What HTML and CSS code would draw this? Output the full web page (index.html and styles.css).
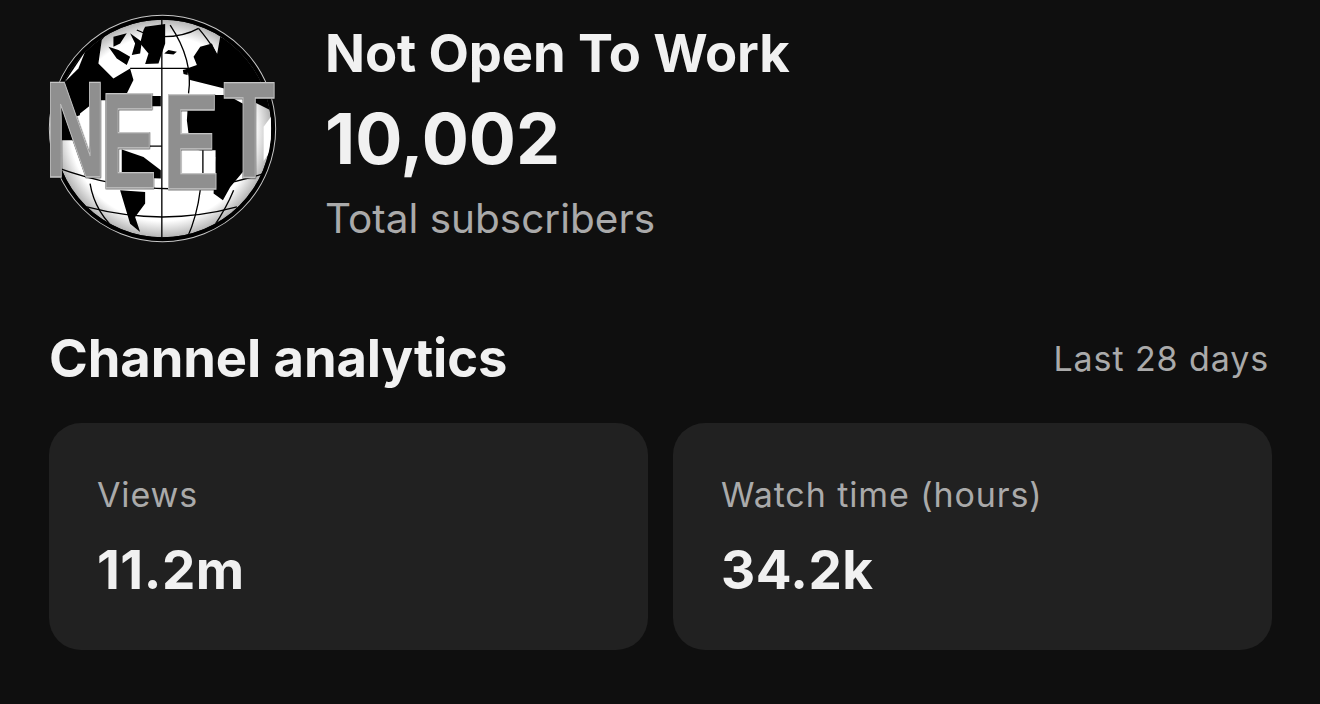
FILE: index.html
```html
<!DOCTYPE html>
<html lang="en">
<head>
    <meta charset="UTF-8">
    <meta name="viewport" content="width=device-width, initial-scale=1.0">
    <title>Channel dashboard</title>
    <link rel="stylesheet" href="styles.css">
</head>
<body>
    <div class="container">
        <header class="channel">
            <svg class="avatar" viewBox="57 45 680 680" aria-label="NEET globe logo">
                <defs>
                    <clipPath id="globeClip"><circle cx="397" cy="385" r="326"/></clipPath>
                    <radialGradient id="shade" cx="0.5" cy="0.5" r="0.5">
                        <stop offset="0" stop-color="#fff"/>
                        <stop offset="0.85" stop-color="#fff"/>
                        <stop offset="1" stop-color="#b4b4b4"/>
                    </radialGradient>
                </defs>
                <circle cx="397" cy="385" r="339" fill="#000" stroke="#c8c8c8" stroke-width="3"/>
                <g clip-path="url(#globeClip)">
                    <circle cx="397" cy="385" r="326" fill="url(#shade)"/>
                    <!-- land -->
                    <path d="M60 420 L60 250 L100 190 L165 130 L240 90 L215 120 L205 190 L250 235 L300 205 L310 240 L280 300 L200 300 L150 340 L140 420Z"/>
                    <path d="M340 90 L345 80 L405 72 L405 130 L385 190 L345 192 L355 160 L330 130Z"/>
                    <path d="M250 110 L290 100 L270 130 L250 140Z M235 140 L265 150 L300 170 L290 195 L260 175Z M300 100 L335 125 L330 160 L305 165 L315 130Z"/>
                    <path d="M570 110 L650 150 L720 260 L740 340 L600 270 L480 240 L470 205 L500 195 L490 170 L510 140 L545 130 L560 165Z"/>
                    <path d="M475 285 L590 285 L655 320 L650 500 L600 560 L578 600 L550 580 L555 470 L480 440 L470 360Z"/>
                    <path d="M275 448 L340 470 L392 510 L392 535 L275 530Z"/>
                    <path d="M270 570 L345 575 L345 610 L315 650 L330 695 L300 670 L285 620Z"/>
                    <path d="M270 288 H392 V318 H275Z"/>
                    <path d="M475 450 H556 V520 H475Z" fill="#fff"/>
                    <path d="M415 150 L440 155 L430 163 L402 160Z"/>
                    <path d="M458 210 L475 205 L472 225 L460 222Z"/>
                    <path d="M700 380 L722 350 L722 450 L700 482Z" fill="#fff"/>
                    <path d="M105 245 L165 155 L145 205Z" fill="#fff"/>
                    <path d="M135 350 L150 345 L155 395 L140 385Z" fill="#fff"/>
                    <!-- graticule -->
                    <g class="grid">
                        <path d="M395 60 V720"/>
                        <path d="M420 75 Q490 180 475 280"/>
                        <path d="M505 85 Q560 150 575 200"/>
                        <path d="M300 205 H475"/>
                        <path d="M400 110 Q460 110 505 85"/>
                        <path d="M320 90 Q350 105 400 110"/>
                        <path d="M75 500 Q400 620 700 520"/>
                        <path d="M170 620 Q400 680 620 620"/>
                        <path d="M180 550 Q195 640 270 700"/>
                        <path d="M510 570 Q500 650 470 715"/>
                        <path d="M610 570 Q590 620 550 680"/>
                        <path d="M275 438 H395"/>
                        <path d="M518 450 V520"/>
                    </g>
                </g>
                <!-- lettering, one text squeezed to the block shapes of the logo -->
                <text class="letters" transform="scale(0.62 1)" x="72 340 642 934" y="530 562 567 530">NEET</text>
            </svg>
            <div class="channel-info">
                <h1>Not Open To Work</h1>
                <div class="sub-count">10,002</div>
                <div class="sub-label">Total subscribers</div>
            </div>
        </header>

        <section class="analytics">
            <div class="analytics-head">
                <h2>Channel analytics</h2>
                <span class="period">Last 28 days</span>
            </div>
            <div class="cards">
                <div class="card">
                    <div class="card-label">Views</div>
                    <div class="card-value">11.2m</div>
                </div>
                <div class="card">
                    <div class="card-label">Watch time (hours)</div>
                    <div class="card-value">34.2k</div>
                </div>
            </div>
        </section>
    </div>
</body>
</html>
```

FILE: styles.css
```css
* {
    box-sizing: border-box;
}

html, body {
    height: 100%;
}

body {
    margin: 0;
    background-color: #0f0f0f;
    color: #f1f1f1;
    font-family: 'Inter', sans-serif;
    overflow: hidden;
}

.container {
    padding: 15px 48px 0 49px;
}

.channel {
    display: flex;
    align-items: flex-start;
    gap: 49px;
}

.avatar {
    display: block;
    width: 227px;
    height: 227px;
    flex-shrink: 0;
    overflow: visible;
}

.grid path {
    fill: none;
    stroke: #000;
    stroke-width: 4;
}

.letters {
    font-family: 'Liberation Sans', sans-serif;
    font-size: 410px;
    font-weight: 700;
    fill: #8f8f8f;
    stroke: #c4c4c4;
    stroke-width: 4;
    filter: drop-shadow(1px 1px 1px #000);
}

.channel-info {
    padding-top: 5px;
}

h1 {
    margin: 0;
    font-size: 52.5px;
    font-weight: 700;
    line-height: 66px;
    letter-spacing: -0.1px;
}

.sub-count {
    font-size: 70px;
    font-weight: 700;
    line-height: 86px;
    margin-top: 10px;
}

.sub-label {
    font-size: 40.5px;
    font-weight: 400;
    line-height: 46px;
    color: #aaaaaa;
    margin-top: 14px;
}

.analytics {
    margin-top: 84px;
}

.analytics-head {
    display: flex;
    justify-content: space-between;
    align-items: center;
    height: 64px;
}

h2 {
    margin: 0;
    font-size: 52.5px;
    font-weight: 700;
    letter-spacing: -0.1px;
}

.period {
    font-size: 34px;
    color: #aaaaaa;
    letter-spacing: 0.9px;
    padding-right: 3px;
}

.cards {
    display: grid;
    grid-template-columns: 1fr 1fr;
    gap: 25px;
    margin-top: 33px;
}

.card {
    height: 227px;
    padding: 50px 48px;
    background-color: #212121;
    border-radius: 32px;
}

.card-label {
    font-size: 34px;
    line-height: 44px;
    letter-spacing: 0.9px;
    color: #aaaaaa;
}

.card-value {
    font-size: 53px;
    font-weight: 700;
    line-height: 60px;
    margin-top: 23px;
    letter-spacing: 0.5px;
}
```
